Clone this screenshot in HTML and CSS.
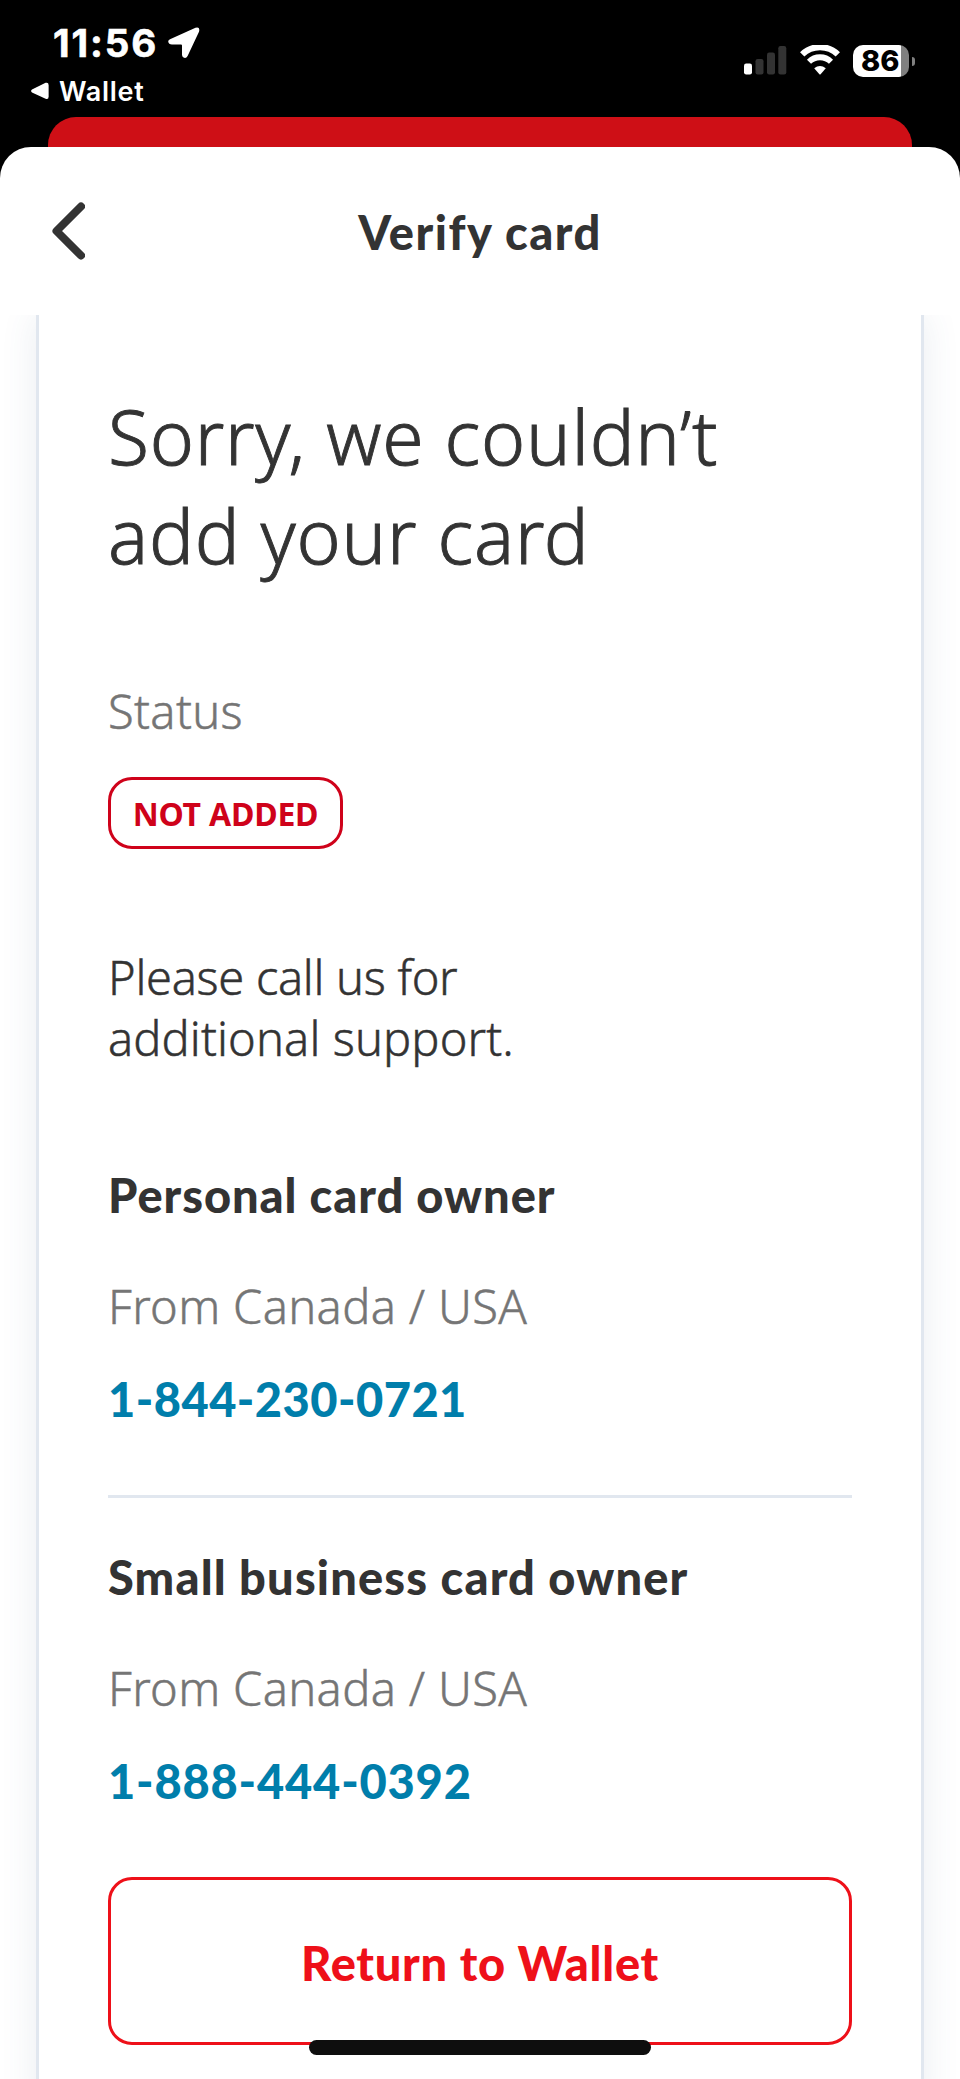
FILE: index.html
```
<!DOCTYPE html>
<html lang="en">

<head>
    <meta charset="UTF-8">
    <meta name="viewport" content="width=device-width, initial-scale=1.0">
    <title>Verify card</title>
    <link rel="stylesheet" href="styles.css">
</head>

<body>
    <div class="status-bar">
        <div class="status-left">
            <div class="clock">
                <span class="time">11:56</span>
                <svg class="location" width="32" height="32" viewBox="0 0 32 32">
                    <path d="M2 12.2 L27.5 .8 Q32.4 -.6 31 4.8 L19.6 29 Q17.8 32 15.2 30.2 Q14 29.6 14 27.5 V18.6 Q14 17.6 13 17.6 H4 Q.6 17.4 .2 14.6 Q.2 13 2 12.2 Z" fill="#fff"/>
                </svg>
            </div>
            <div class="back-app">
                <svg width="18" height="18" viewBox="0 0 18 18">
                    <path d="M1 7.6 L14.6 .8 Q17.6 0 17.6 3 V14.6 Q17.6 18 14.6 16.8 L1 10.4 Q-.8 9 1 7.6 Z" fill="#fff"/>
                </svg>
                <span>Wallet</span>
            </div>
        </div>
        <div class="status-right">
            <svg width="43" height="30" viewBox="0 0 43 30">
                <rect x="0" y="18.5" width="8" height="11" rx="2.2" fill="#fff"/>
                <rect x="11.5" y="14" width="8" height="15.5" rx="2.2" fill="#333"/>
                <rect x="23" y="7.5" width="8" height="22" rx="2.2" fill="#333"/>
                <rect x="34.3" y="1" width="8" height="28.5" rx="2.2" fill="#333"/>
            </svg>
            <svg width="40" height="30" viewBox="0 0 40 30">
                <path d="M2.2 9.4 A25.5 25.5 0 0 1 37.8 9.4" fill="none" stroke="#fff" stroke-width="6.2"/>
                <path d="M9 16.8 A15.6 15.6 0 0 1 31 16.8" fill="none" stroke="#fff" stroke-width="5.8"/>
                <path d="M14.2 23.2 Q20 18.6 25.8 23.2 L20.6 29.2 Q20 29.8 19.4 29.2 Z" fill="#fff"/>
            </svg>
            <div class="battery"><span>86</span></div>
        </div>
    </div>

    <div class="previous-sheet"></div>

    <div class="sheet">
        <header class="sheet-header">
            <button class="back" aria-label="Back">
                <svg width="34" height="58" viewBox="0 0 34 58">
                    <path d="M30 4.5 L5.5 29 L30 53.5" fill="none" stroke="#333" stroke-width="8" stroke-linecap="round" stroke-linejoin="round"/>
                </svg>
            </button>
            <h1>Verify card</h1>
        </header>

        <div class="scroll">
            <main class="card">
                <h2>Sorry, we couldn’t<br>add your card</h2>

                <p class="label status-label">Status</p>
                <div class="badge">NOT ADDED</div>

                <p class="message"><span class="line-one">Please call us for</span><br>additional support.</p>

                <section class="contact">
                    <h3>Personal card owner</h3>
                    <p class="label">From Canada / USA</p>
                    <a class="phone">1-844-230-0721</a>
                </section>
                <section class="contact business">
                    <h3>Small business card owner</h3>
                    <p class="label">From Canada / USA</p>
                    <a class="phone">1-888-444-0392</a>
                </section>

                <button class="return">Return to Wallet</button>
            </main>
        </div>
    </div>

    <div class="home-indicator"></div>
</body>

</html>
```

FILE: styles.css
```
* {
    box-sizing: border-box;
    margin: 0;
    padding: 0;
}

body {
    position: relative;
    width: 960px;
    height: 2079px;
    overflow: hidden;
    background: #000;
    color: #333;
    font-family: "Noto Sans", sans-serif;
}

svg {
    display: block;
}

button {
    border: none;
    background: none;
    font-family: inherit;
}

.status-bar {
    display: flex;
    justify-content: space-between;
    height: 117px;
    padding: 20px 51px 0 31px;
    color: #fff;
    font-family: Inter, sans-serif;
}

.clock {
    display: flex;
    padding-left: 22px;
    height: 54px;
}

.time {
    width: 115px;
    font-size: 38.5px;
    font-weight: 700;
    letter-spacing: 1.9px;
    line-height: 47px;
    -webkit-text-stroke: 0.6px;
}

.location {
    margin-top: 7px;
}

.back-app {
    display: flex;
    align-items: center;
    gap: 10px;
    height: 34px;
    font-size: 27px;
    font-weight: 600;
    letter-spacing: 0.7px;
}

.status-right {
    display: flex;
    align-items: flex-start;
    padding-top: 25px;
}

.status-right svg {
    margin-right: 13px;
}

.battery {
    position: relative;
    width: 56px;
    height: 32px;
    border-radius: 10px;
    background: linear-gradient(to right, #fff 48px, #808080 48px);
    color: #000;
    font-size: 29px;
    font-weight: 800;
    line-height: 32px;
    padding-left: 8px;
}

.battery::after {
    content: "";
    position: absolute;
    left: 59px;
    top: 12px;
    width: 3px;
    height: 9px;
    border-radius: 0 4px 4px 0;
    background: #808080;
}

.previous-sheet {
    height: 30px;
    margin: 0 48px;
    border-radius: 28px 28px 0 0;
    background: #ce0f16;
}

.sheet {
    height: 1932px;
    border-radius: 31px 31px 0 0;
    background: #fff;
    overflow: hidden;
}

.sheet-header {
    display: grid;
    grid-template-columns: 100px 1fr 100px;
    align-items: center;
    height: 168px;
}

.back {
    margin: 0 0 1px 51px;
    width: 34px;
}

.sheet-header h1 {
    padding-top: 2px;
    text-align: center;
    font-family: Lato, sans-serif;
    font-size: 47px;
    font-weight: 900;
    letter-spacing: 1.5px;
    line-height: 60px;
}

.scroll {
    height: 1764px;
    padding: 0 36px;
    overflow: hidden;
}

.card {
    height: 1800px;
    padding: 72px 69px 0;
    border: solid #e1e7ef;
    border-width: 0 3px;
    box-shadow: 0 0 34px rgba(60, 90, 130, 0.11);
}

h2 {
    font-size: 75px;
    font-weight: 300;
    letter-spacing: 0.75px;
    line-height: 99px;
    -webkit-text-stroke: 0.9px;
}

.label,
.message,
h3,
.phone {
    display: block;
    font-size: 47px;
    font-weight: 300;
    line-height: 62px;
}

.label,
.message {
    -webkit-text-stroke: 0.5px;
}

.label {
    color: #757575;
    letter-spacing: 0.35px;
}

.status-label {
    margin-top: 95px;
}

.badge {
    width: 235px;
    height: 72px;
    margin-top: 35px;
    border: 3px solid #cf021a;
    border-radius: 24px;
    color: #cf021a;
    font-size: 32px;
    font-weight: 700;
    letter-spacing: -0.2px;
    line-height: 68px;
    text-align: center;
}

.message {
    margin: 98px 0 95px;
    letter-spacing: 0.12px;
    line-height: 61px;
}

.line-one {
    letter-spacing: -0.3px;
}

h3,
.phone {
    font-family: Lato, sans-serif;
    font-weight: 900;
}

h3 {
    letter-spacing: 0.95px;
}

.business h3 {
    letter-spacing: 1.15px;
}

.contact .label {
    margin: 49px 0 31px;
}

.phone {
    color: #007eab;
    letter-spacing: 0.45px;
}

.business .phone {
    letter-spacing: 0.8px;
}

.contact.business {
    margin-top: 65px;
    padding-top: 48px;
    border-top: 3px solid #e1e7ef;
}

.return {
    display: block;
    width: 744px;
    height: 168px;
    margin-top: 65px;
    padding-top: 3px;
    border: 3px solid #ee1019;
    border-radius: 24px;
    color: #ee1019;
    font-family: Lato, sans-serif;
    font-size: 47px;
    font-weight: 900;
    letter-spacing: 0.7px;
}

.home-indicator {
    position: absolute;
    left: 309px;
    top: 2040px;
    width: 342px;
    height: 15px;
    border-radius: 8px;
    background: #0e0e0e;
}
```
